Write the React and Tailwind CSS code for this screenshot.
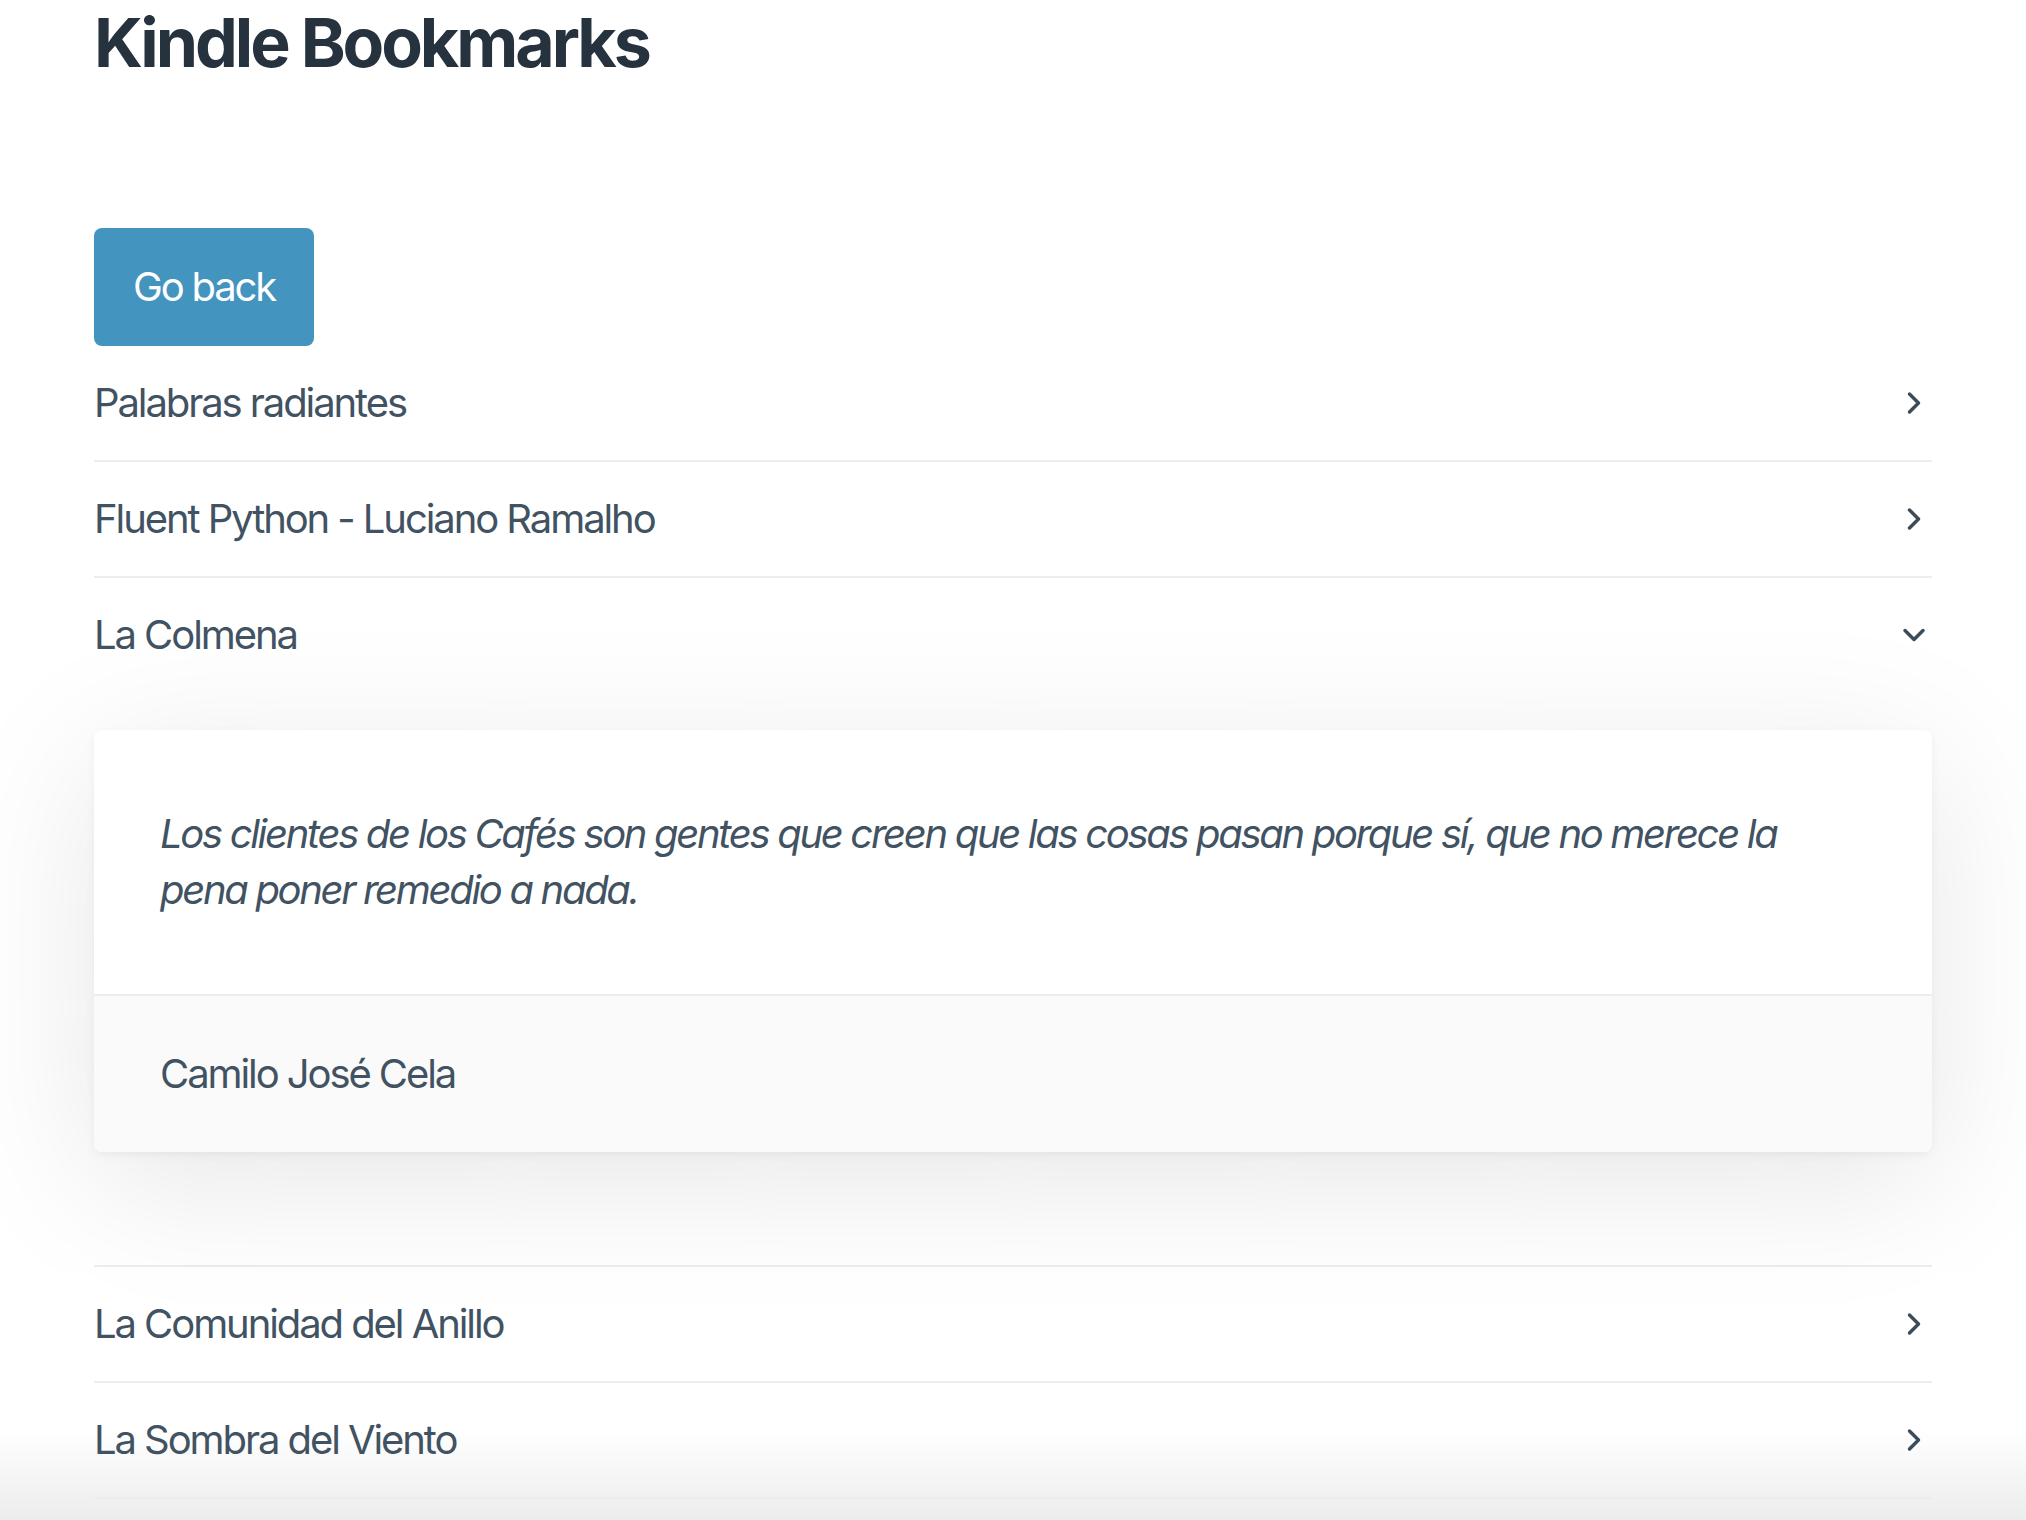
import React, { useState } from 'react';
import { ChevronRight, ChevronDown } from 'lucide-react';

const books = [
  { id: 1, title: 'Palabras radiantes' },
  { id: 2, title: 'Fluent Python - Luciano Ramalho' },
  {
    id: 3,
    title: 'La Colmena',
    quote:
      'Los clientes de los Cafés son gentes que creen que las cosas pasan porque sí, que no merece la pena poner remedio a nada.',
    author: 'Camilo José Cela',
  },
  { id: 4, title: 'La Comunidad del Anillo' },
  { id: 5, title: 'La Sombra del Viento' },
];

function BookRow({ book, open, onToggle }) {
  return (
    <div className="border-b-2 border-[#ededf0]">
      <button
        onClick={onToggle}
        className="w-full flex items-center justify-between py-[29px] text-left"
      >
        <span className="text-[40px] leading-[56px] tracking-[-0.052em] text-[#415262]">{book.title}</span>
        {open ? (
          <ChevronDown size={36} strokeWidth={2.3} className="text-[#3b4b58]" />
        ) : (
          <ChevronRight size={36} strokeWidth={2.3} className="text-[#3b4b58]" />
        )}
      </button>

      {open && book.quote && (
        <div className="pt-[38px] pb-[113px]">
          <div className="rounded-[8px] bg-white shadow-[0_3px_10px_rgba(0,0,0,0.05),0_30px_150px_rgba(0,0,0,0.1)]">
            <p className="px-[66px] py-[76px] text-[40px] leading-[56px] italic tracking-[-0.058em] text-[#415262]">
              {book.quote}
            </p>
            <div className="border-t-2 border-[#ededf0] bg-[#fafafa] rounded-b-[8px] px-[66px] py-[50px]">
              <span className="text-[40px] leading-[56px] tracking-[-0.052em] text-[#415262]">{book.author}</span>
            </div>
          </div>
        </div>
      )}
    </div>
  );
}

export default function App() {
  const [openId, setOpenId] = useState(3);

  return (
    <div className="h-[1520px] overflow-hidden bg-[linear-gradient(to_bottom,#ffffff_0px,#ffffff_1430px,#ececed_1520px)] font-['Inter','Liberation_Sans',sans-serif]">
      <div className="px-[94px] pt-[2px]">
        <h1 className="text-[68px] leading-[80px] font-bold tracking-[-0.045em] text-[#26323d]">
          Kindle Bookmarks
        </h1>

        <button className="mt-[146px] h-[118px] w-[220px] rounded-[8px] bg-[#4394bf] text-white text-[40px] leading-[56px] tracking-[-0.055em]">
          Go back
        </button>

        {/* Book list */}
        <div>
          {books.map((book) => (
            <BookRow
              key={book.id}
              book={book}
              open={openId === book.id}
              onToggle={() => setOpenId(openId === book.id ? null : book.id)}
            />
          ))}
        </div>
      </div>
    </div>
  );
}
